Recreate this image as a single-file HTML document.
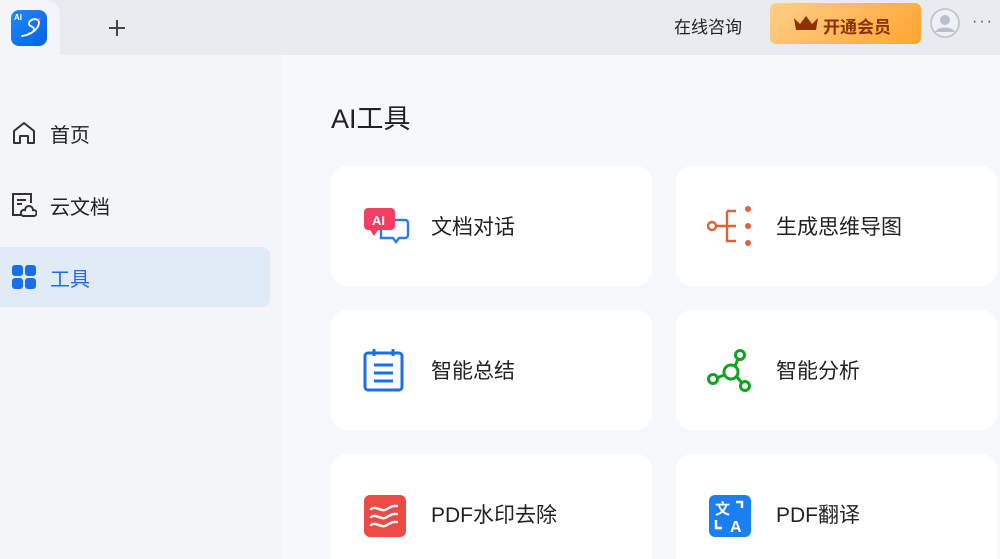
<!DOCTYPE html>
<html><head><meta charset="utf-8"><style>
*{margin:0;padding:0;box-sizing:border-box}
html,body{width:1000px;height:559px;overflow:hidden}
body{background:#f7f8fa;font-family:"Liberation Sans","Noto Sans CJK SC",sans-serif;position:relative;color:#222}
.top{position:absolute;left:0;top:0;width:1000px;height:55px;background:#e8ebef}
.tab{position:absolute;left:0;top:0;width:60px;height:55px;background:#f3f5f8;border-top-right-radius:14px}
.side{position:absolute;left:0;top:55px;width:282px;height:504px;background:#f3f5f8}
.nav{position:absolute;left:0;width:270px;height:60px;display:flex;align-items:center;font-size:20px;color:#222}
.nav svg{position:absolute;left:11px}
.nav span{position:absolute;left:50px}
.card{position:absolute;width:321px;height:120px;background:#fff;border-radius:16px}
.card .t{position:absolute;left:100px;top:48px;font-size:21px;color:#222;line-height:28px}
.card svg{position:absolute;left:30px;top:40px}
</style></head><body>
<div class="top"></div>
<div class="tab"></div>
<svg style="position:absolute;left:11px;top:10px" width="36" height="36" viewBox="0 0 36 36"><defs><linearGradient id="g" x1="0" y1="0" x2="1" y2="1"><stop offset="0" stop-color="#1a8cff"/><stop offset="1" stop-color="#0a5fe0"/></linearGradient></defs><rect width="36" height="36" rx="8" fill="url(#g)"/><text x="3" y="10" font-size="8" font-weight="bold" fill="#fff" font-family="Liberation Sans">AI</text><path d="M27 10c-4-2-9 0-9 4 0 3 5 2 5 5 0 4-6 6-12 7M27 10c3 4-2 12-10 14" stroke="#fff" stroke-width="1.8" fill="none" stroke-linecap="round"/><circle cx="28" cy="9" r="1.3" fill="#ff5a7a"/></svg>
<svg style="position:absolute;left:108px;top:19px" width="18" height="18"><path d="M9 1v16M1 9h16" stroke="#444" stroke-width="2"/></svg>
<div style="position:absolute;left:674px;top:13px;font-size:17px;color:#222">在线咨询</div>
<div style="position:absolute;left:770px;top:3px;width:151px;height:41px;border-radius:6px;background:linear-gradient(135deg,#ffce88,#ffa52e);"></div>
<svg style="position:absolute;left:792px;top:14px" width="28" height="20"><path d="M2 4l6 6 6-8 6 8 6-6-2 12H4z" fill="#8a3200"/></svg>
<div style="position:absolute;left:823px;top:13px;font-size:17px;font-weight:bold;color:#8a3200">开通会员</div>
<svg style="position:absolute;left:929px;top:7px" width="32" height="32"><circle cx="16" cy="16" r="14" fill="#eef0f4" stroke="#b9c0cc" stroke-width="1.6"/><circle cx="16" cy="13" r="5" fill="#b9c0cc"/><path d="M6 25c3-6 17-6 20 0" fill="#b9c0cc"/></svg>
<div style="position:absolute;left:972px;top:13px;font-size:16px;color:#555;letter-spacing:2px">···</div>
<div class="side"></div>
<div class="nav" style="top:103px"><svg width="26" height="26" viewBox="0 0 26 26"><path d="M3 11L13 3l10 8v12h-6v-7h-8v7H3z" fill="none" stroke="#333" stroke-width="2" stroke-linejoin="round"/></svg><span>首页</span></div>
<div class="nav" style="top:175px"><svg width="26" height="26" viewBox="0 0 26 26"><path d="M10 23H2V2h18v9" fill="none" stroke="#333" stroke-width="2"/><path d="M6 8h9M6 12h5" stroke="#333" stroke-width="2"/><path d="M12 24h11a3 3 0 0 0-1-6 4 4 0 0 0-8 0 3 3 0 0 0-2 6z" fill="none" stroke="#333" stroke-width="2"/></svg><span>云文档</span></div>
<div class="nav" style="top:247px;background:#e1eaf7;border-radius:0 8px 8px 0;color:#1a6fe8"><svg width="26" height="26" viewBox="0 0 26 26"><rect x="1" y="1" width="11" height="11" rx="3" fill="#1a6fe8"/><rect x="14" y="1" width="11" height="11" rx="3" fill="#1a6fe8"/><rect x="1" y="14" width="11" height="11" rx="3" fill="#1a6fe8"/><rect x="14" y="14" width="11" height="11" rx="3" fill="#1a6fe8"/></svg><span>工具</span></div>
<div style="position:absolute;left:331px;top:97px;font-size:27px;color:#222">AI工具</div>

<div class="card" style="left:331px;top:166px"><svg width="50" height="40" viewBox="0 0 50 40" style="top:40px"><path d="M20 14h24a3 3 0 0 1 3 3v12a3 3 0 0 1-3 3h-6l-3 4-3-4H20z" fill="none" stroke="#2a7de8" stroke-width="2.4"/><rect x="3" y="2" width="31" height="22" rx="4" fill="#f23e62"/><path d="M9 24l4 6 4-6z" fill="#f23e62"/><text x="11" y="19" font-size="13" font-weight="bold" fill="#fff" font-family="Liberation Sans">AI</text></svg><div class="t">文档对话</div></div>
<div class="card" style="left:676px;top:166px"><svg width="50" height="48" viewBox="0 0 50 48" style="top:37px"><circle cx="6" cy="23" r="4" fill="none" stroke="#e06038" stroke-width="2.4"/><path d="M10 23h11M21 8v30h9M21 8h9M21 23h9" fill="none" stroke="#e06038" stroke-width="2.4"/><circle cx="42" cy="6" r="3" fill="#e06038"/><circle cx="42" cy="23" r="3" fill="#e06038"/><circle cx="42" cy="40" r="3" fill="#e06038"/></svg><div class="t">生成思维导图</div></div>
<div class="card" style="left:331px;top:310px"><svg width="50" height="46" viewBox="0 0 50 46" style="top:37px"><rect x="4" y="6" width="37" height="37" rx="3" fill="none" stroke="#1a6fe8" stroke-width="3"/><path d="M13 2v7M32 2v7M13 18h19M13 26h19M13 34h19" stroke="#1a6fe8" stroke-width="3"/></svg><div class="t">智能总结</div></div>
<div class="card" style="left:676px;top:310px"><svg width="50" height="48" viewBox="0 0 50 48" style="top:37px"><circle cx="25" cy="25" r="7" fill="none" stroke="#12a31e" stroke-width="3"/><circle cx="34" cy="8" r="4.5" fill="none" stroke="#12a31e" stroke-width="3"/><circle cx="7" cy="32" r="4.5" fill="none" stroke="#12a31e" stroke-width="3"/><circle cx="39" cy="39" r="4.5" fill="none" stroke="#12a31e" stroke-width="3"/><path d="M29 19l3-7M18 28l-7 3M31 30l5 6" stroke="#12a31e" stroke-width="3"/></svg><div class="t">智能分析</div></div>
<div class="card" style="left:331px;top:454px"><svg width="50" height="46" viewBox="0 0 50 46" style="top:38px"><rect x="3" y="3" width="42" height="42" rx="6" fill="#ee4a45"/><path d="M10 17c6-4 10 4 16 0s8-3 10-3M10 25c6-4 10 4 16 0s8-3 10-3M10 33c6-4 10 4 16 0s8-3 10-3" stroke="#fff" stroke-width="2.4" fill="none" stroke-linecap="round"/></svg><div class="t">PDF水印去除</div></div>
<div class="card" style="left:676px;top:454px"><svg width="50" height="46" viewBox="0 0 50 46" style="top:38px"><rect x="3" y="3" width="42" height="42" rx="6" fill="#1a7ff0"/><text x="9" y="22" font-size="15" font-weight="bold" fill="#fff" font-family="Noto Sans CJK SC">文</text><text x="24" y="40" font-size="16" font-weight="bold" fill="#fff" font-family="Liberation Sans">A</text><path d="M30 10h6v6M10 28v8h6" stroke="#fff" stroke-width="2.4" fill="none"/></svg><div class="t">PDF翻译</div></div>
</body></html>
